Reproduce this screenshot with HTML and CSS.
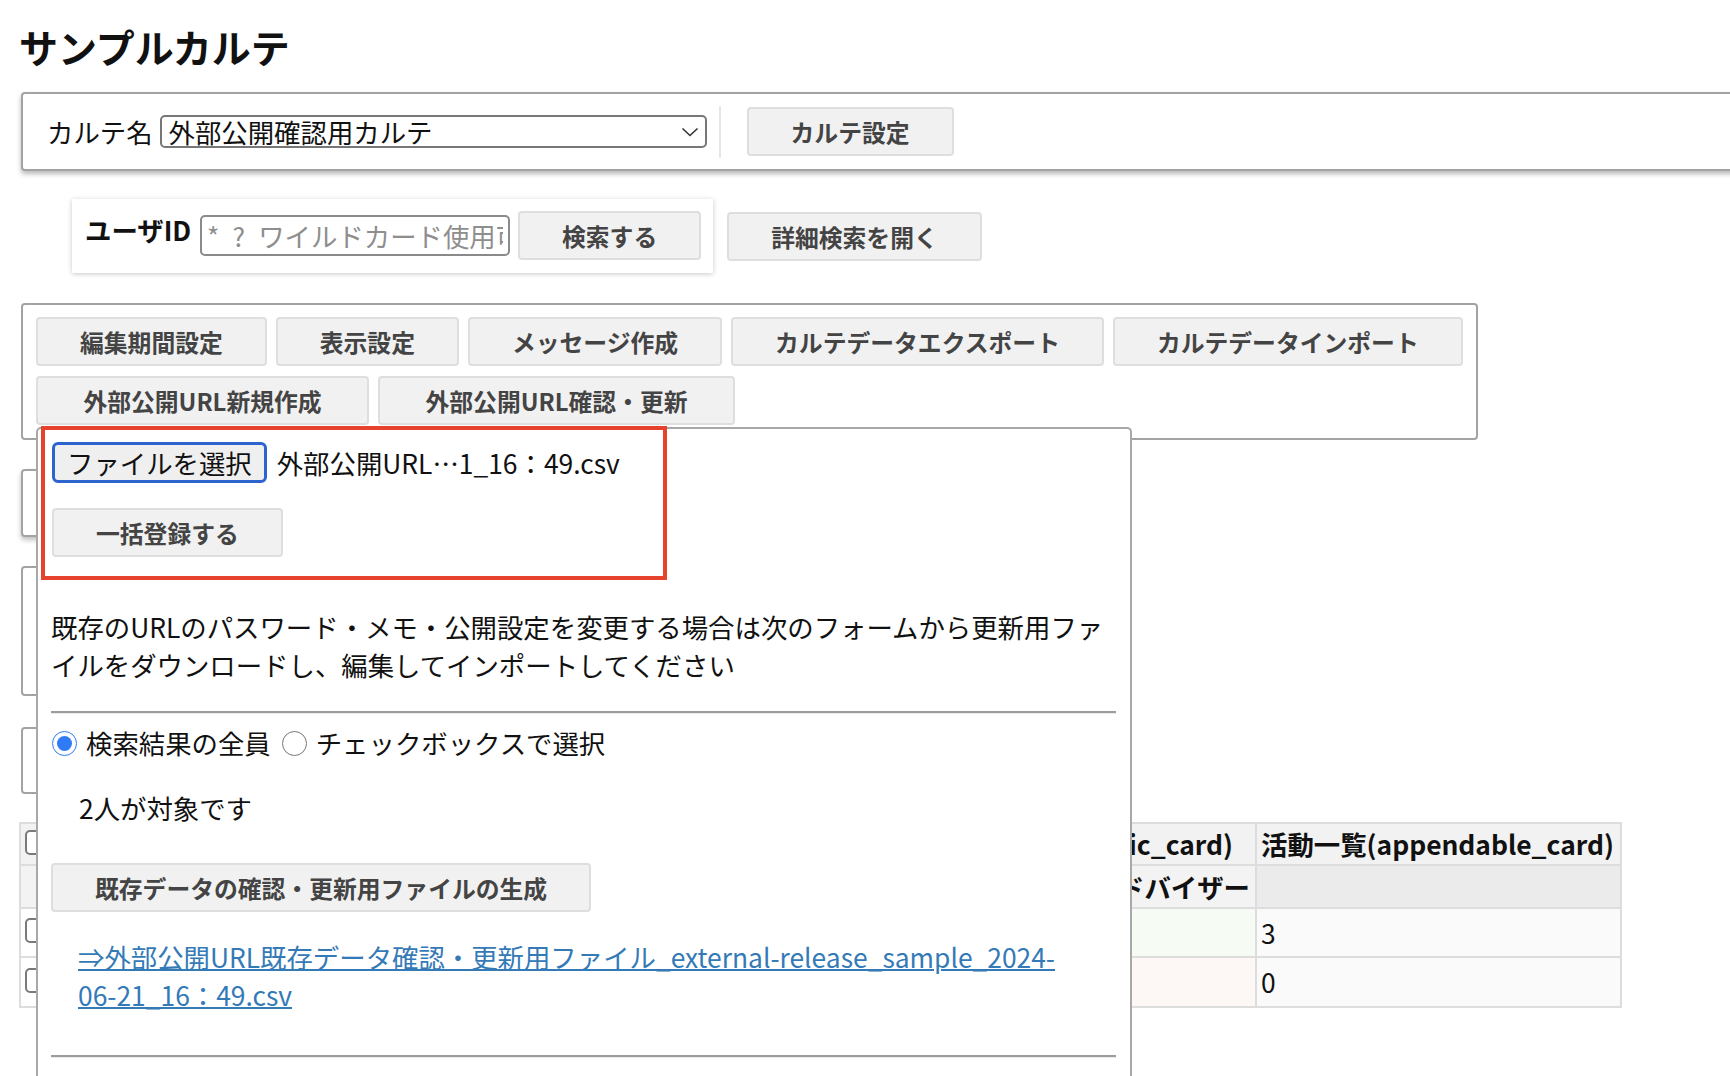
FILE: index.html
```html
<!DOCTYPE html>
<html lang="ja">
<head>
<meta charset="utf-8">
<title>サンプルカルテ</title>
<link rel="stylesheet" href="styles.css">
</head>
<body>
<div class="page">
  <h1 class="title">サンプルカルテ</h1>

  <div class="panel karte-bar">
    <label class="karte-label" for="karte">カルテ名</label>
    <div class="select-wrap">
      <select id="karte" class="select"><option>外部公開確認用カルテ</option></select>
      <svg class="chevron" width="18" height="10" viewBox="0 0 18 10"><path d="M1.5 1.5 L9 8.5 L16.5 1.5" fill="none" stroke="#333" stroke-width="1.6"/></svg>
    </div>
    <span class="divider"></span>
    <button class="btn">カルテ設定</button>
  </div>

  <div class="search-row">
    <div class="search-card">
      <span class="search-label">ユーザID</span>
      <input class="search-input" type="text" placeholder="*&ensp;?&ensp;ワイルドカード使用可">
      <button class="btn search-btn">検索する</button>
    </div>
    <button class="btn detail-btn">詳細検索を開く</button>
  </div>

  <div class="panel action-panel">
    <div class="action-row">
      <button class="btn">編集期間設定</button>
      <button class="btn">表示設定</button>
      <button class="btn">メッセージ作成</button>
      <button class="btn">カルテデータエクスポート</button>
      <button class="btn">カルテデータインポート</button>
    </div>
    <div class="action-row">
      <button class="btn btn-url-new">外部公開URL新規作成</button>
      <button class="btn btn-url-check">外部公開URL確認・更新</button>
    </div>
  </div>

  <div class="panel hidden-box box-a"></div>
  <div class="panel hidden-box box-b"></div>
  <div class="panel hidden-box box-c"></div>

  <table class="users">
    <colgroup><col class="c-check"><col class="c-mid"><col class="c-last"></colgroup>
    <tr class="head1">
      <th class="cell-check"><input type="checkbox" class="check"></th>
      <th class="mid">基本情報(basic_card)</th>
      <th>活動一覧(appendable_card)</th>
    </tr>
    <tr class="head2">
      <th class="cell-check"></th>
      <th class="mid">担当アドバイザー</th>
      <th class="last"></th>
    </tr>
    <tr class="row-a">
      <td class="cell-check"><input type="checkbox" class="check"></td>
      <td class="mid"></td>
      <td class="last">3</td>
    </tr>
    <tr class="row-b">
      <td class="cell-check"><input type="checkbox" class="check"></td>
      <td class="mid"></td>
      <td class="last">0</td>
    </tr>
  </table>

  <div class="popup">
    <div class="annot">
      <div class="file-row">
        <button class="file-btn">ファイルを選択</button>
        <span class="file-name">外部公開URL…1_16：49.csv</span>
      </div>
      <button class="btn bulk-btn">一括登録する</button>
    </div>
    <p class="note">既存のURLのパスワード・メモ・公開設定を変更する場合は次のフォームから更新用ファイルをダウンロードし、編集してインポートしてください</p>
    <hr class="rule">
    <div class="radio-row">
      <label class="radio-label"><input type="radio" name="target" class="radio" checked>検索結果の全員</label>
      <label class="radio-label"><input type="radio" name="target" class="radio">チェックボックスで選択</label>
    </div>
    <p class="count">2人が対象です</p>
    <button class="btn gen-btn">既存データの確認・更新用ファイルの生成</button>
    <p class="link-line"><a href="#" class="dl-link">⇒外部公開URL既存データ確認・更新用ファイル_external-release_sample_2024-<br>06-21_16：49.csv</a></p>
    <hr class="rule rule-bottom">
  </div>
</div>
</body>
</html>
```

FILE: styles.css
```css
* { box-sizing: border-box; }
html, body { margin: 0; padding: 0; overflow: hidden; }
body {
  font-family: "Noto Sans CJK JP", "Noto Sans", sans-serif;
  font-size: 26.4px;
  line-height: 38px;
  color: #111;
  background: #fff;
}
.page {
  position: relative;
  display: flow-root;
  padding-left: 21px;
  height: 1076px;
}

.title {
  margin: 27px 0 27px -2px;
  font-size: 39px;
  line-height: 38px;
  font-weight: 700;
  color: #111;
}

.panel {
  border: 2px solid #a3a3a3;
  border-radius: 4px;
  background: #fff;
}

.btn {
  height: 49px;
  padding: 0 42px;
  border: 2px solid #dedede;
  border-radius: 4px;
  background: #f1f1f1;
  color: #444;
  font-family: inherit;
  font-size: 23.8px;
  font-weight: 700;
  line-height: 45px;
  white-space: nowrap;
}

/* karte bar */
.karte-bar {
  display: flex;
  align-items: center;
  width: 1760px;
  height: 79px;
  padding: 0 24px;
  box-shadow: 0 3px 5px rgba(0, 0, 0, 0.28);
}
.karte-label { margin-right: 7px; }
.select-wrap { position: relative; }
.select {
  appearance: none;
  -webkit-appearance: none;
  display: block;
  width: 547px;
  height: 33px;
  border: 2px solid #777;
  border-radius: 5px;
  background: #fff;
  font: inherit;
  line-height: 29px;
  padding: 0 30px 0 7px;
  color: #111;
}
.chevron { position: absolute; right: 8px; top: 12px; }
.divider {
  width: 2px;
  height: 52px;
  background: #e6e6e6;
  margin: 0 26px 0 12px;
}

/* search */
.search-row {
  display: flex;
  align-items: center;
  margin: 28px 0 30px 51px;
}
.search-card {
  display: flex;
  align-items: flex-start;
  padding: 12px 12px 13px 13px;
  background: #fff;
  box-shadow: 0 1px 5px rgba(0, 0, 0, 0.22);
}
.search-label {
  width: 115px;
  font-weight: 700;
  line-height: 38px;
}
.search-input {
  margin-top: 4px;
  width: 310px;
  height: 41px;
  border: 2px solid #8a8a8a;
  border-radius: 5px;
  padding: 0 5px;
  font: inherit;
  color: #111;
}
.search-input::placeholder { color: #8e8e8e; }
.search-btn { margin-left: 8px; }
.detail-btn { margin-left: 14px; }

/* action panel */
.action-panel {
  width: fit-content;
  padding: 12px 13px 13px;
}
.action-row { display: flex; gap: 9px; }
.action-row + .action-row { margin-top: 10px; }
.btn-url-new { width: 333px; }
.btn-url-check { width: 357px; }

/* hidden boxes under popup */
.hidden-box { width: 900px; }
.box-a { margin-top: 29px; height: 68px; box-shadow: 0 3px 5px rgba(0, 0, 0, 0.25); }
.box-b { margin-top: 29px; height: 130px; }
.box-c { margin-top: 31px; height: 67px; }

/* table */
.users {
  margin: 28px 0 0 -2px;
  border-collapse: collapse;
  table-layout: fixed;
  width: 1601px;
}
.c-check { width: 60px; }
.c-mid { width: 1176px; }
.c-last { width: 365px; }
.users th, .users td {
  border: 2px solid #dddddd;
  padding: 0 4px;
  line-height: 38px;
  text-align: left;
  white-space: nowrap;
  overflow: hidden;
  vertical-align: middle;
}
.users th { font-weight: 700; }
.users .mid { text-align: right; }
.head1 { height: 42px; background: #f2f2f2; }
.head1 .mid { padding-right: 22px; }
.head2 { height: 43px; }
.head2 .mid { padding-right: 5px; background: #f3f3f3; }
.head2 .cell-check { background: #f3f3f3; }
.row-a { height: 49px; }
.row-a .mid { background: #f6fbf3; }
.row-b { height: 50px; }
.row-b .mid { background: #fdf7f6; }
.users .last { background: #fafafa; }
.users .head2 .last { background: #ebebeb; }
.check {
  appearance: none;
  -webkit-appearance: none;
  display: block;
  width: 25px;
  height: 25px;
  margin: 0 0 4px 0;
  border: 2px solid #7a7a7a;
  border-radius: 5px;
  background: #fff;
}

/* popup */
.popup {
  position: absolute;
  left: 36px;
  top: 427px;
  width: 1096px;
  padding: 0 14px 40px 13px;
  border: 2px solid #a8a8a8;
  border-bottom: none;
  border-radius: 5px 5px 0 0;
  background: #fff;
}
.annot {
  width: 626px;
  margin: -3px 0 0 -10px;
  border: 4px solid #e5432d;
  padding: 12px 7px 19px;
}
.file-row { display: flex; align-items: center; height: 41px; }
.file-btn {
  height: 41px;
  padding: 0 12px;
  border: 3px solid #2d63cf;
  border-radius: 6px;
  background: #efefef;
  font-family: inherit;
  font-size: 26.4px;
  line-height: 35px;
  color: #111;
}
.file-name { margin-left: 10px; }
.bulk-btn { display: block; margin-top: 25px; }
.note { margin: 28px 0 0; }
.rule {
  margin: 27px 0 0;
  height: 0;
  border: none;
  border-top: 2px solid #9c9c9c;
  border-bottom: 1px solid #ececec;
}
.radio-row { display: flex; align-items: center; height: 38px; margin-top: 10px; }
.radio-label { display: flex; align-items: center; margin-right: 10px; }
.radio {
  width: 25px;
  height: 25px;
  margin: 0 9px 0 1px;
  accent-color: #2f7bf5;
}
.count { margin: 27px 0 0; padding-left: 28px; }
.gen-btn { display: block; margin-top: 36px; }
.link-line { margin: 26px 0 0; padding-left: 27px; }
.dl-link {
  color: #347ab7;
  text-decoration: underline;
  text-decoration-thickness: 2px;
}
.rule-bottom { margin-top: 41px; }
```
